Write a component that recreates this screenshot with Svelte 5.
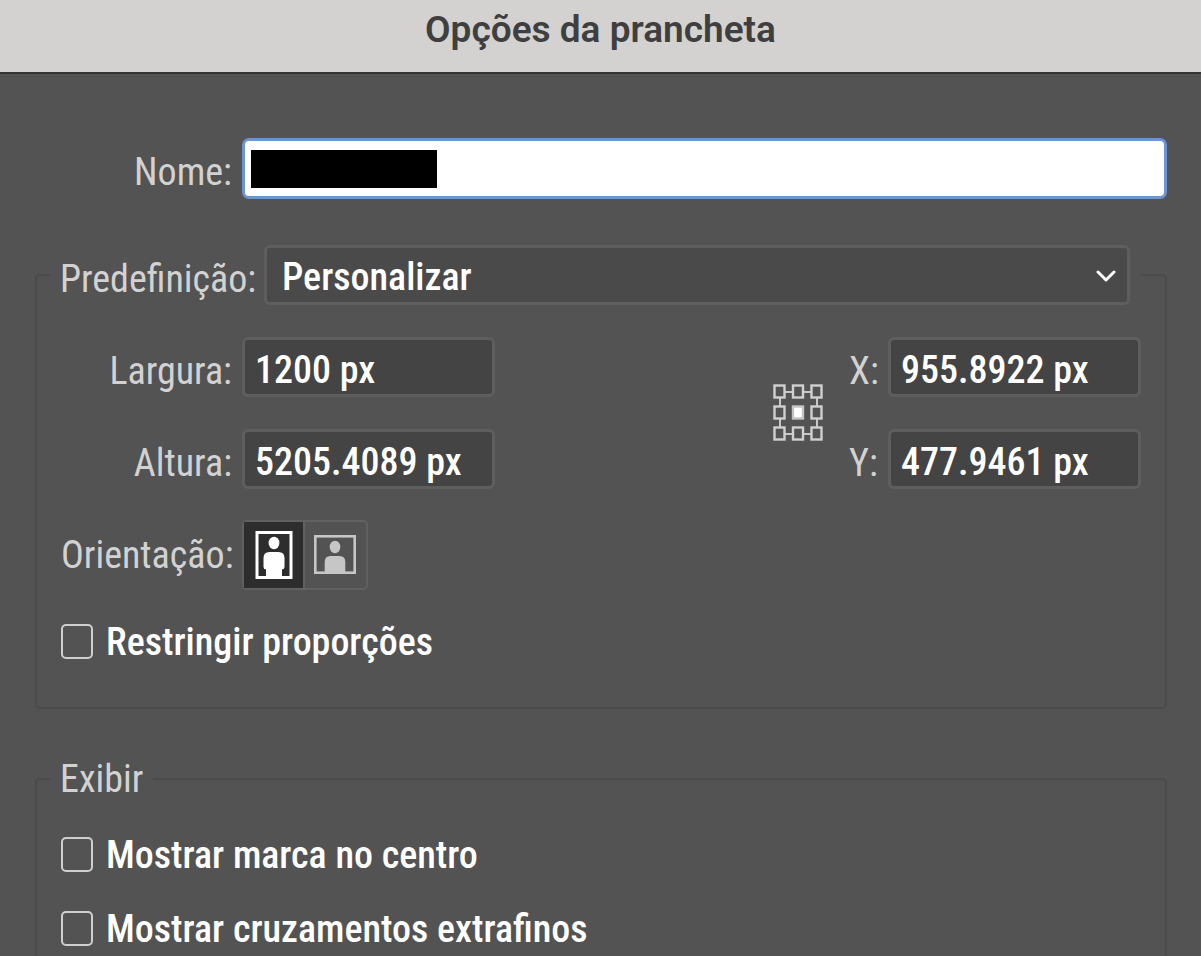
<script>
  let preset = $state('Personalizar');
  let orientation = $state('portrait');
  let constrain = $state(false);
  let size = $state({ width: '1200 px', height: '5205.4089 px' });
  let position = $state({ x: '955.8922 px', y: '477.9461 px' });
  let display = $state([
    { id: 'center', label: 'Mostrar marca no centro', on: false },
    { id: 'hairs', label: 'Mostrar cruzamentos extrafinos', on: false }
  ]);
  const handles = [0, 1, 2].flatMap((r) => [0, 1, 2].map((c) => ({ x: 1.5 + c * 18.5, y: 1.5 + r * 21, mid: r === 1 && c === 1 })));
</script>

<main>
  <header><h1>Opções da prancheta</h1></header>

  <form>
    <div class="row name-row">
      <label class="side" for="name">Nome:</label>
      <div class="name-field">
        <span class="mask"></span>
        <input id="name" type="text" />
      </div>
    </div>

    <fieldset>
      <legend class="wide">
        <label for="preset">Predefinição:</label>
        <span class="picker">
          <select id="preset" bind:value={preset}>
            <option>Personalizar</option>
          </select>
          <svg width="20" height="12" viewBox="0 0 20 12" aria-hidden="true">
            <path d="M2 2 L10 10 L18 2" fill="none" stroke="#fff" stroke-width="3" stroke-linecap="round" stroke-linejoin="round" />
          </svg>
        </span>
      </legend>

      <div class="metrics">
        <div class="stack">
          <div class="row">
            <label class="side" for="w">Largura:</label>
            <input class="box" id="w" type="text" bind:value={size.width} />
          </div>
          <div class="row">
            <label class="side" for="h">Altura:</label>
            <input class="box" id="h" type="text" bind:value={size.height} />
          </div>
        </div>
        <div class="place">
          <svg width="51" height="58" viewBox="0 0 51 58" aria-hidden="true">
            <path d="M7 8H44V50H7Z" fill="none" stroke="#c8c8c8" stroke-width="2" />
            {#each handles as h}
              <rect x={h.x} y={h.y} width="10" height="12" fill={h.mid ? '#fff' : '#535353'} stroke={h.mid ? '#c4c4c4' : '#d0d0d0'} stroke-width="2.4" />
            {/each}
          </svg>
          <div class="stack">
            <div class="row">
              <label for="x">X:</label>
              <input class="box" id="x" type="text" bind:value={position.x} />
            </div>
            <div class="row">
              <label for="y">Y:</label>
              <input class="box" id="y" type="text" bind:value={position.y} />
            </div>
          </div>
        </div>
      </div>

      <div class="row orient">
        <span class="side">Orientação:</span>
        <div class="segments">
          <button type="button" class:on={orientation === 'portrait'} aria-label="Retrato" onclick={() => (orientation = 'portrait')}>
            <svg width="38" height="50" viewBox="0 0 38 50">
              <rect x="2" y="2.5" width="34" height="45" fill="none" stroke="currentColor" stroke-width="3" />
              <ellipse cx="19" cy="13" rx="5.4" ry="6.2" fill="currentColor" />
              <path d="M14.500 22H23.500Q29.500 22 29.500 28V37Q29.500 39 27 39.500V47H11V39.500Q8.500 39 8.500 37V28Q8.500 22 14.500 22Z" fill="currentColor" />
            </svg>
          </button>
          <button type="button" class:on={orientation === 'landscape'} aria-label="Paisagem" onclick={() => (orientation = 'landscape')}>
            <svg width="42" height="44" viewBox="0 0 42 44">
              <rect x="1.300" y="3.300" width="39.400" height="36.400" fill="none" stroke="currentColor" stroke-width="2.600" />
              <ellipse cx="21" cy="14" rx="5.300" ry="6.200" fill="currentColor" />
              <path d="M16.500 23H25.500Q31.300 23 31.300 29V39H10.700V29Q10.700 23 16.500 23Z" fill="currentColor" />
            </svg>
          </button>
        </div>
      </div>

      <label class="check"><input type="checkbox" bind:checked={constrain} /><span>Restringir proporções</span></label>
    </fieldset>

    <fieldset class="display">
      <legend>Exibir</legend>
      {#each display as item (item.id)}
        <label class="check"><input type="checkbox" bind:checked={item.on} /><span>{item.label}</span></label>
      {/each}
    </fieldset>
  </form>
</main>

<style>
  :global(body) { margin: 0; background: #535353; }
  main {
    height: 100vh;
    overflow: hidden;
    background: #535353;
    color: #d2d2d2;
    font: 400 38px/40px "Roboto Condensed", "Liberation Sans", sans-serif;
  }
  header {
    box-sizing: border-box;
    padding: 10px 0 22px;
    background: #d3d2d0;
    border-bottom: 2px solid #353535;
  }
  h1 {
    margin: 0;
    text-align: center;
    color: #3f3f3f;
    font: 600 37px/40px Roboto, "Liberation Sans", sans-serif;
  }
  form { padding: 64px 34px 0 35px; }
  .row { display: flex; align-items: center; gap: 10px; }
  .row > label, legend > label { padding-top: 7px; }
  .side { flex: none; width: 171px; text-align: right; white-space: nowrap; }
  .name-row { margin-bottom: 46px; padding-left: 26px; }
  .name-field {
    box-sizing: border-box;
    flex: 1;
    display: flex;
    align-items: center;
    height: 61px;
    padding-left: 6px;
    background: #fff;
    border: 3px solid #6a94d2;
    border-radius: 7px;
  }
  .mask { width: 186px; height: 38px; background: #000; }
  .name-field input {
    flex: 1;
    min-width: 0;
    border: 0;
    outline: 0;
    background: transparent;
    color: #111;
    font: inherit;
  }
  fieldset {
    margin: 0;
    min-width: 0;
    padding: 32px 24px 46px;
    border: 2px solid #4b4b4b;
    border-radius: 5px;
  }
  legend { margin-left: -11px; padding: 0 10px; }
  .wide {
    box-sizing: border-box;
    display: flex;
    align-items: center;
    width: calc(100% + 10px);
  }
  .wide label { flex: none; width: 204px; }
  .picker { position: relative; flex: 1; height: 60px; }
  select, .box {
    box-sizing: border-box;
    height: 60px;
    padding: 6px 10px 0;
    border: 3px solid #5e5e5e;
    border-radius: 6px;
    background: #444;
    color: #fff;
    font: inherit;
    font-weight: 500;
    outline: 0;
  }
  select {
    appearance: none;
    display: block;
    width: 100%;
    padding: 4px 50px 0 15px;
    background: #4a4a4a;
  }
  .picker svg { position: absolute; right: 14px; top: 25px; pointer-events: none; }
  .box { width: 253px; }
  .metrics { display: flex; justify-content: space-between; }
  .stack { display: flex; flex-direction: column; gap: 32px; }
  .place { display: flex; align-items: center; gap: 25px; }
  .place label { width: 29px; }
  .orient { margin: 31px 0; }
  .segments { display: flex; border: 2px solid #616161; border-radius: 5px; }
  button {
    box-sizing: border-box;
    display: grid;
    place-items: center;
    width: 59px;
    height: 66px;
    padding: 0;
    border: 0;
    background: transparent;
    color: #c6c6c6;
  }
  button + button { width: 63px; padding-right: 2px; border-left: 2px solid #616161; }
  .on { background: #2d2d2d; color: #fff; }
  .check { display: flex; align-items: center; gap: 13px; color: #fff; font-weight: 500; }
  .check span { padding-top: 2px; line-height: 38px; }
  .check input {
    appearance: none;
    box-sizing: border-box;
    width: 32px;
    height: 35px;
    margin: 0;
    border: 2px solid #cfcfcf;
    border-radius: 5px;
  }
  .check input:checked { background: #cfcfcf; }
  .display { margin-top: 50px; padding-top: 35px; }
  .display .check { margin-bottom: 34px; }
</style>
